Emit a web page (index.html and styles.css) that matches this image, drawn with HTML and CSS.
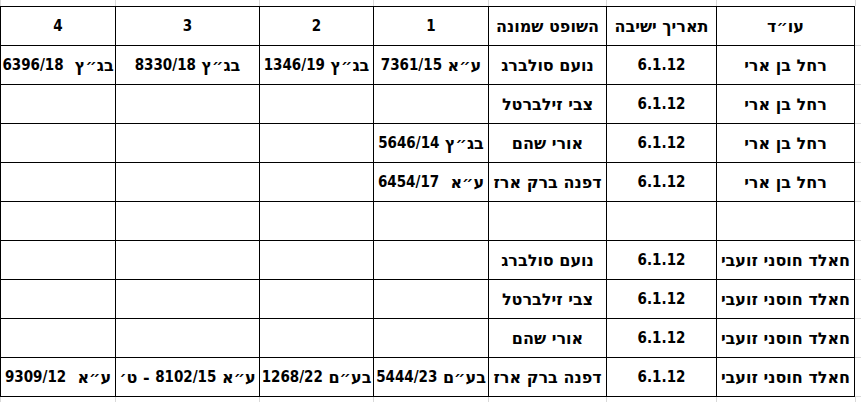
FILE: index.html
```html
<!DOCTYPE html>
<html lang="he" dir="rtl">
<head>
<meta charset="utf-8">
<title>טבלת דיונים</title>
<link rel="stylesheet" href="styles.css">
</head>
<body>
<div class="sheet">
  <div class="gap top"></div><div class="top"></div><div class="top"></div><div class="top"></div><div class="top"></div><div class="top"></div><div class="top"></div><div class="top"></div>

  <div class="gap"></div><div class="c name hd">עו״ד</div><div class="c hd">תאריך ישיבה</div><div class="c hd">השופט שמונה</div><div class="c hd"><span class="n">1</span></div><div class="c hd"><span class="n">2</span></div><div class="c hd"><span class="n">3</span></div><div class="c hd"><span class="n">4</span></div>

  <div class="gap"></div><div class="c name">רחל בן ארי</div><div class="c"><span class="n">6.1.12</span></div><div class="c">נועם סולברג</div><div class="c">ע״א <span class="n">7361/15</span></div><div class="c">בג״ץ <span class="n">1346/19</span></div><div class="c">בג״ץ <span class="n">8330/18</span></div><div class="c">בג״ץ&nbsp; <span class="n">6396/18</span></div>

  <div class="gap"></div><div class="c name">רחל בן ארי</div><div class="c"><span class="n">6.1.12</span></div><div class="c">צבי זילברטל</div><div class="c"></div><div class="c"></div><div class="c"></div><div class="c"></div>

  <div class="gap"></div><div class="c name">רחל בן ארי</div><div class="c"><span class="n">6.1.12</span></div><div class="c">אורי שהם</div><div class="c">בג״ץ <span class="n">5646/14</span></div><div class="c"></div><div class="c"></div><div class="c"></div>

  <div class="gap"></div><div class="c name">רחל בן ארי</div><div class="c"><span class="n">6.1.12</span></div><div class="c">דפנה ברק ארז</div><div class="c">ע״א&nbsp; <span class="n">6454/17</span></div><div class="c"></div><div class="c"></div><div class="c"></div>

  <div class="gap"></div><div class="c name"></div><div class="c"></div><div class="c"></div><div class="c"></div><div class="c"></div><div class="c"></div><div class="c"></div>

  <div class="gap"></div><div class="c name">חאלד חוסני זועבי</div><div class="c"><span class="n">6.1.12</span></div><div class="c">נועם סולברג</div><div class="c"></div><div class="c"></div><div class="c"></div><div class="c"></div>

  <div class="gap"></div><div class="c name">חאלד חוסני זועבי</div><div class="c"><span class="n">6.1.12</span></div><div class="c">צבי זילברטל</div><div class="c"></div><div class="c"></div><div class="c"></div><div class="c"></div>

  <div class="gap"></div><div class="c name">חאלד חוסני זועבי</div><div class="c"><span class="n">6.1.12</span></div><div class="c">אורי שהם</div><div class="c"></div><div class="c"></div><div class="c"></div><div class="c"></div>

  <div class="gap"></div><div class="c name">חאלד חוסני זועבי</div><div class="c"><span class="n">6.1.12</span></div><div class="c">דפנה ברק ארז</div><div class="c">בע״ם <span class="n">5444/23</span></div><div class="c">בע״ם <span class="n">1268/22</span></div><div class="c">ע״א <span class="n">8102/15</span> - ט׳</div><div class="c">ע״א&nbsp; <span class="n">9309/12</span></div>

  <div class="gap bot"></div><div class="bot"></div><div class="bot"></div><div class="bot"></div><div class="bot"></div><div class="bot"></div><div class="bot"></div><div class="bot"></div>
</div>
</body>
</html>
```
FILE: styles.css
```css
html, body {
  margin: 0;
  padding: 0;
  background: #ffffff;
}

.sheet {
  direction: rtl;
  display: grid;
  grid-template-columns: 6px 139px 110px 118px 115px 114px 144px 115px;
  grid-template-rows: 6px 40px repeat(9, 39px) 5px;
  width: 861px;
  font-family: "DejaVu Sans", sans-serif;
  font-weight: bold;
  font-size: 16px;
  color: #000000;
}

.sheet > div {
  box-sizing: border-box;
  min-width: 0;
}

.top,
.bot {
  border-left: 1px solid #d9d9d9;
}

.gap {
  border-bottom: 1px solid #d9d9d9;
}

.gap.top,
.gap.bot {
  border-bottom: none;
}

.c {
  display: flex;
  align-items: center;
  justify-content: center;
  white-space: pre;
  overflow: hidden;
  border-left: 1px solid #000000;
  border-bottom: 1px solid #000000;
}

.n {
  font-family: "DejaVu Sans Condensed", "DejaVu Sans", sans-serif;
  font-size: 15px;
}

.hd {
  border-top: 1px solid #000000;
}

.name {
  border-right: 1px solid #000000;
}
```
